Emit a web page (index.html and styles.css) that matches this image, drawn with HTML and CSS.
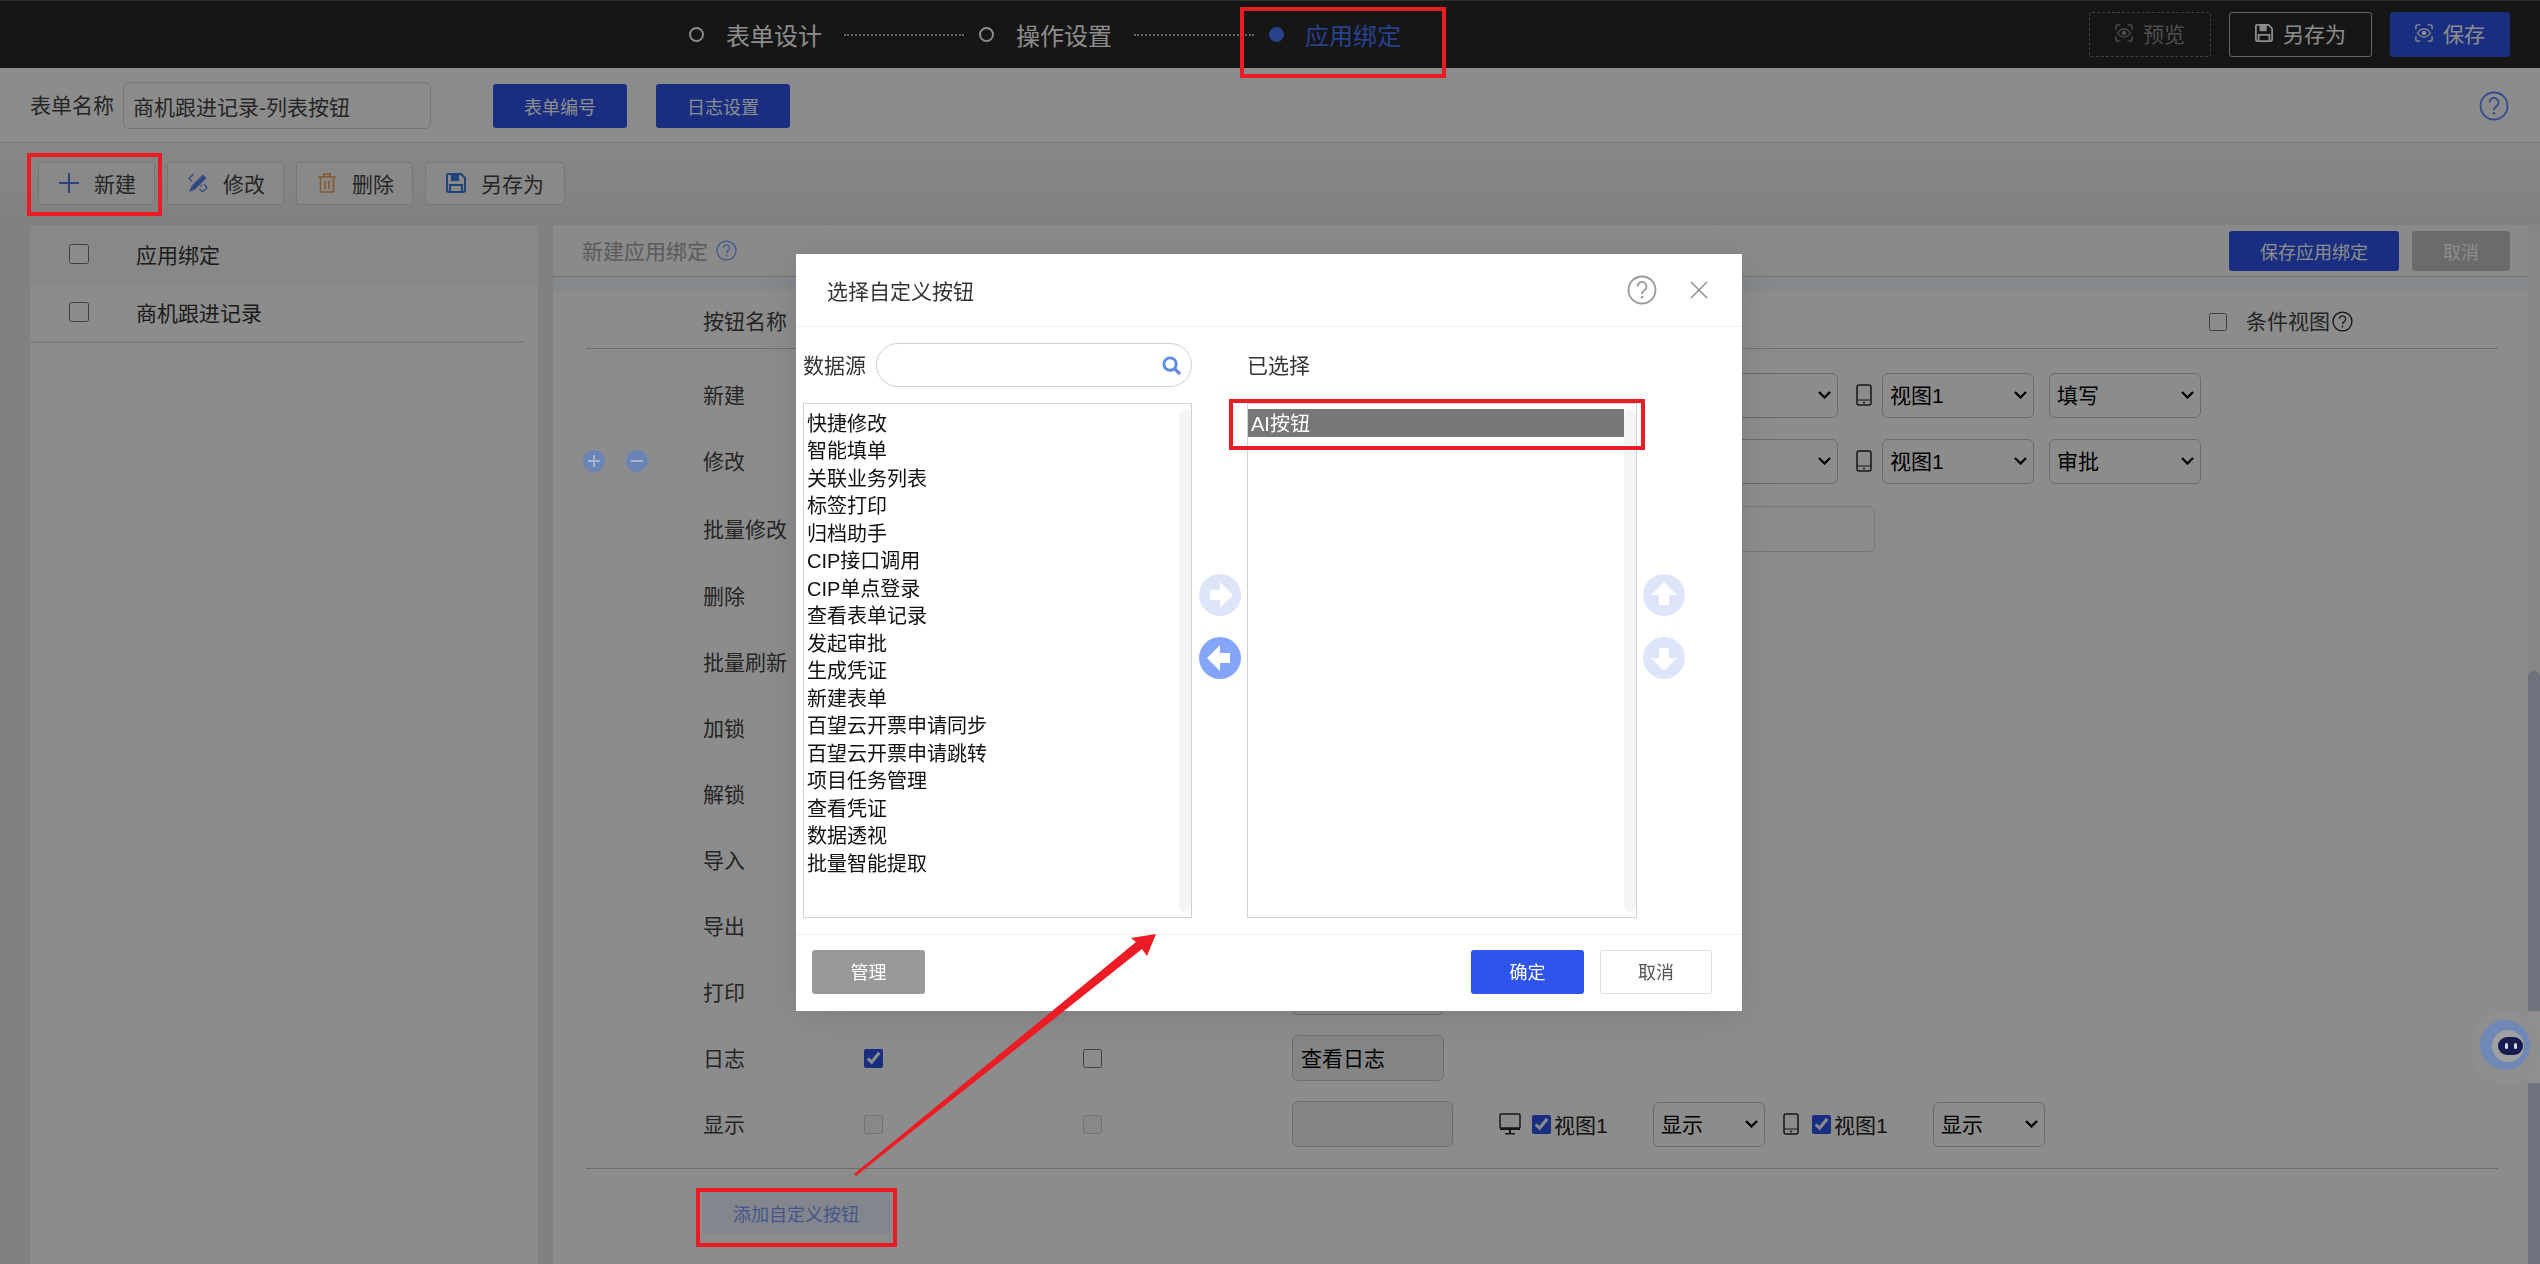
FILE: index.html
```html
<!DOCTYPE html>
<html lang="zh-CN">
<head>
  <meta charset="UTF-8">
  <meta name="viewport" content="width=device-width, initial-scale=1.0">
  <title>应用绑定</title>
  <link rel="stylesheet" href="styles.css">
</head>
<body>

  <svg class="icon-defs" aria-hidden="true">
    <symbol id="i-help" viewBox="0 0 30 30">
      <circle cx="15" cy="15" r="13.5" fill="none" stroke="currentColor" stroke-width="1.8"/>
      <path d="M10.5 11.5a4.5 4.5 0 1 1 7 3.7c-1.6 1.1-2.5 2-2.5 3.8" fill="none" stroke="currentColor" stroke-width="1.8"/>
      <circle cx="15" cy="22.3" r="1.3" fill="currentColor"/>
    </symbol>
    <symbol id="i-scan" viewBox="0 0 20 20">
      <path d="M1 6V3a2 2 0 0 1 2-2h3M14 1h3a2 2 0 0 1 2 2v3M19 14v3a2 2 0 0 1-2 2h-3M6 19H3a2 2 0 0 1-2-2v-3" fill="none" stroke="currentColor" stroke-width="1.6"/>
      <path d="M3 10c2-3.500 4.300-4.500 7-4.500s5 1 7 4.500c-2 3.500-4.300 4.500-7 4.500S5 13.500 3 10z" fill="none" stroke="currentColor" stroke-width="1.4"/>
      <circle cx="10" cy="10" r="2.500" fill="currentColor"/>
    </symbol>
    <symbol id="i-save" viewBox="0 0 20 20">
      <path d="M2 1h13l4 4v12a2 2 0 0 1-2 2H3a2 2 0 0 1-2-2V2a1 1 0 0 1 1-1z" fill="none" stroke="currentColor" stroke-width="2"/>
      <path d="M5 1h8v7H5z" fill="currentColor"/>
      <path d="M4 19v-7h12v7" fill="none" stroke="currentColor" stroke-width="2"/>
    </symbol>
    <symbol id="i-monitor" viewBox="0 0 22 22">
      <rect x="1" y="1" width="20" height="14" rx="1" fill="none" stroke="currentColor" stroke-width="1.500"/>
      <path d="M1 15h20v2H1zM10 17h2v3h-2zM6 20h10v1.500H6z" fill="currentColor"/>
    </symbol>
    <symbol id="i-phone" viewBox="0 0 16 22">
      <rect x="1" y="1" width="14" height="20" rx="2" fill="none" stroke="currentColor" stroke-width="1.500"/>
      <path d="M1 16h14" stroke="currentColor" stroke-width="1"/>
      <circle cx="8" cy="18.500" r="1" fill="currentColor"/>
    </symbol>
    <symbol id="i-arrow" viewBox="0 0 42 42">
      <path d="M11 16h10V8l13 13-13 13v-8H11z" fill="#fff"/>
    </symbol>
  </svg>

  <header class="topbar">
    <div class="steps">
      <span class="step-dot"></span><span class="step-name">表单设计</span>
      <span class="step-line"></span>
      <span class="step-dot"></span><span class="step-name">操作设置</span>
      <span class="step-line"></span>
      <span class="step-dot step-dot-on"></span><span class="step-name step-name-on">应用绑定</span>
    </div>
    <div class="top-actions">
      <button class="top-btn top-btn-off"><svg class="top-icon"><use href="#i-scan"/></svg>预览</button>
      <button class="top-btn top-btn-line"><svg class="top-icon"><use href="#i-save"/></svg>另存为</button>
      <button class="top-btn top-btn-main"><svg class="top-icon"><use href="#i-scan"/></svg>保存</button>
    </div>
  </header>

  <section class="form-head">
    <span class="form-label">表单名称</span>
    <input class="form-name" type="text" value="商机跟进记录-列表按钮">
    <button class="blue-btn form-btn-first">表单编号</button>
    <button class="blue-btn form-btn-second">日志设置</button>
    <svg class="form-help"><use href="#i-help"/></svg>
  </section>

  <section class="toolbar">
    <button class="tool-btn">
      <svg class="tool-icon tool-plus" viewBox="0 0 20 20"><path d="M10 0v20M0 10h20" stroke="currentColor" stroke-width="2"/></svg>新建
    </button>
    <button class="tool-btn">
      <svg class="tool-icon tool-edit" viewBox="0 0 20 20">
        <path d="M15 1.500l3.500 3.500L7 16.500 1 19l2.500-6z" fill="currentColor"/>
        <path d="M5.500 1L1 5.500l3 3M14 12l-1.500 1.500M16 11l3 3.500-4.500 4.500-3-3" fill="none" stroke="currentColor" stroke-width="1.200"/>
      </svg>修改
    </button>
    <button class="tool-btn">
      <svg class="tool-icon tool-trash" viewBox="0 0 20 20">
        <path d="M1 4h18M7 4V1h6v3M3.500 4v15h13V4M8 8v8M12 8v8" fill="none" stroke="currentColor" stroke-width="1.600"/>
      </svg>删除
    </button>
    <button class="tool-btn">
      <svg class="tool-icon tool-save"><use href="#i-save"/></svg>另存为
    </button>
  </section>

  <main class="main">
    <aside class="side">
      <div class="side-row side-row-head"><input type="checkbox"><span>应用绑定</span></div>
      <div class="side-row"><input type="checkbox"><span>商机跟进记录</span></div>
    </aside>

    <section class="panel">
      <div class="panel-head">
        <span class="panel-title">新建应用绑定</span>
        <svg class="panel-help"><use href="#i-help"/></svg>
        <button class="blue-btn panel-save">保存应用绑定</button>
        <button class="gray-btn panel-cancel">取消</button>
      </div>
      <div class="panel-band"></div>

      <div class="cfg-head">
        <span>按钮名称</span>
        <label class="cfg-cond"><input type="checkbox"><span>条件视图</span><svg class="cond-help"><use href="#i-help"/></svg></label>
      </div>

      <div class="cfg-rows">
        <div class="cfg-row">
          <span></span><span class="cfg-name">新建</span><input type="checkbox" checked><input type="checkbox">
          <div class="cfg-last">
            <input class="cfg-input" type="text" value="新建">
            <svg class="dev-monitor"><use href="#i-monitor"/></svg>
            <select class="cfg-sel-pc"><option>视图1</option></select>
            <select class="cfg-sel-mode"><option>填写</option></select>
            <svg class="dev-phone"><use href="#i-phone"/></svg>
            <select class="cfg-sel cfg-sel-m"><option>视图1</option></select>
            <select class="cfg-sel cfg-sel-t"><option>填写</option></select>
          </div>
        </div>
        <div class="cfg-row">
          <div class="row-ops">
            <svg class="op-icon" viewBox="0 0 22 22"><circle cx="11" cy="11" r="11" fill="currentColor"/><path d="M5 11h12M11 5v12" stroke="#a4b4d2" stroke-width="2"/></svg>
            <svg class="op-icon" viewBox="0 0 22 22"><circle cx="11" cy="11" r="11" fill="currentColor"/><path d="M5 11h12" stroke="#a4b4d2" stroke-width="2"/></svg>
          </div>
          <span class="cfg-name">修改</span><input type="checkbox" checked><input type="checkbox">
          <div class="cfg-last">
            <input class="cfg-input" type="text" value="修改">
            <svg class="dev-monitor"><use href="#i-monitor"/></svg>
            <select class="cfg-sel-pc"><option>视图1</option></select>
            <select class="cfg-sel-mode"><option>审批</option></select>
            <svg class="dev-phone"><use href="#i-phone"/></svg>
            <select class="cfg-sel cfg-sel-m"><option>视图1</option></select>
            <select class="cfg-sel cfg-sel-t"><option>审批</option></select>
          </div>
        </div>
        <div class="cfg-row cfg-row-tall">
          <span></span><span class="cfg-name">批量修改</span><input type="checkbox"><input type="checkbox">
          <div class="cfg-last">
            <input class="cfg-input" type="text" value="批量修改">
            <input class="cfg-extra" type="text">
          </div>
        </div>
        <div class="cfg-row">
          <span></span><span class="cfg-name">删除</span><input type="checkbox"><input type="checkbox">
          <div class="cfg-last"><input class="cfg-input" type="text" value="删除"></div>
        </div>
        <div class="cfg-row">
          <span></span><span class="cfg-name">批量刷新</span><input type="checkbox"><input type="checkbox">
          <div class="cfg-last"><input class="cfg-input" type="text" value="批量刷新"></div>
        </div>
        <div class="cfg-row">
          <span></span><span class="cfg-name">加锁</span><input type="checkbox"><input type="checkbox">
          <div class="cfg-last"><input class="cfg-input" type="text" value="加锁"></div>
        </div>
        <div class="cfg-row">
          <span></span><span class="cfg-name">解锁</span><input type="checkbox"><input type="checkbox">
          <div class="cfg-last"><input class="cfg-input" type="text" value="解锁"></div>
        </div>
        <div class="cfg-row">
          <span></span><span class="cfg-name">导入</span><input type="checkbox"><input type="checkbox">
          <div class="cfg-last"><input class="cfg-input" type="text" value="导入"></div>
        </div>
        <div class="cfg-row">
          <span></span><span class="cfg-name">导出</span><input type="checkbox"><input type="checkbox">
          <div class="cfg-last"><input class="cfg-input" type="text" value="导出"></div>
        </div>
        <div class="cfg-row">
          <span></span><span class="cfg-name">打印</span><input type="checkbox"><input type="checkbox">
          <div class="cfg-last"><input class="cfg-input" type="text" value="打印"></div>
        </div>
        <div class="cfg-row">
          <span></span><span class="cfg-name">日志</span><input type="checkbox" checked><input type="checkbox">
          <div class="cfg-last"><input class="cfg-input" type="text" value="查看日志"></div>
        </div>
        <div class="cfg-row">
          <span></span><span class="cfg-name">显示</span><input type="checkbox" disabled><input type="checkbox" disabled>
          <div class="cfg-last">
            <input class="cfg-input cfg-input-wide" type="text" disabled>
            <svg class="dev-monitor dev-monitor-show"><use href="#i-monitor"/></svg>
            <label class="view-check"><input type="checkbox" checked>视图1</label>
            <select class="show-sel"><option>显示</option></select>
            <svg class="dev-phone dev-phone-show"><use href="#i-phone"/></svg>
            <label class="view-check"><input type="checkbox" checked>视图1</label>
            <select class="show-sel"><option>显示</option></select>
          </div>
        </div>
      </div>

      <div class="cfg-foot"><button class="add-btn">添加自定义按钮</button></div>
    </section>

    <div class="scrollbar"><span class="scroll-thumb"></span></div>
  </main>

  <!-- 悬浮机器人 -->
  <div class="bot">
    <svg viewBox="0 0 69 72" width="69" height="72">
      <rect x="57" y="0" width="12" height="72" fill="#8f8f8f"/>
      <circle cx="36" cy="36" r="35" fill="#8e8e8e" stroke="#939393" stroke-width="1"/>
      <circle cx="34" cy="34" r="25" fill="#6f88b6"/>
      <circle cx="37" cy="35" r="16" fill="#a0a0a0"/>
      <rect x="27" y="26" width="25" height="18" rx="9" fill="#171c50"/>
      <rect x="34" y="32" width="3" height="6" rx="1.500" fill="#d8d8e0"/>
      <rect x="43" y="32" width="3" height="6" rx="1.500" fill="#d8d8e0"/>
    </svg>
  </div>

  <div class="mask"></div>

  <div class="dialog">
    <div class="dialog-head">
      <span class="dialog-title">选择自定义按钮</span>
      <svg class="dialog-help"><use href="#i-help"/></svg>
      <svg class="dialog-close" viewBox="0 0 18 18"><path d="M1 1l16 16M17 1L1 17" stroke="currentColor" stroke-width="1.400"/></svg>
    </div>

    <div class="dialog-body">
      <div class="pick-col">
        <div class="pick-head">
          <span class="pick-label">数据源</span>
          <div class="search-box">
            <svg class="search-icon" viewBox="0 0 20 20"><circle cx="8.500" cy="8.500" r="6.500" fill="none" stroke="currentColor" stroke-width="3"/><path d="M13 13l6 6" stroke="currentColor" stroke-width="3.500"/></svg>
          </div>
        </div>
        <div class="pick-list">
          <ul class="pick-items">
            <li>快捷修改</li>
            <li>智能填单</li>
            <li>关联业务列表</li>
            <li>标签打印</li>
            <li>归档助手</li>
            <li>CIP接口调用</li>
            <li>CIP单点登录</li>
            <li>查看表单记录</li>
            <li>发起审批</li>
            <li>生成凭证</li>
            <li>新建表单</li>
            <li>百望云开票申请同步</li>
            <li>百望云开票申请跳转</li>
            <li>项目任务管理</li>
            <li>查看凭证</li>
            <li>数据透视</li>
            <li>批量智能提取</li>
          </ul>
          <span class="pick-track"></span>
        </div>
      </div>

      <div class="move-col">
        <span class="round-btn round-off"><svg viewBox="0 0 42 42"><use href="#i-arrow"/></svg></span>
        <span class="round-btn round-on"><svg class="flip-left" viewBox="0 0 42 42"><use href="#i-arrow"/></svg></span>
      </div>

      <div class="pick-col pick-col-right">
        <div class="pick-head"><span class="pick-label">已选择</span></div>
        <div class="pick-list">
          <ul class="pick-items pick-items-on">
            <li class="pick-selected">AI按钮</li>
          </ul>
          <span class="pick-track"></span>
        </div>
      </div>

      <div class="move-col move-col-right">
        <span class="round-btn round-off"><svg class="turn-up" viewBox="0 0 42 42"><use href="#i-arrow"/></svg></span>
        <span class="round-btn round-off"><svg class="turn-down" viewBox="0 0 42 42"><use href="#i-arrow"/></svg></span>
      </div>
    </div>

    <div class="dialog-foot">
      <button class="dlg-btn dlg-manage">管理</button>
      <button class="dlg-btn dlg-ok">确定</button>
      <button class="dlg-btn dlg-cancel">取消</button>
    </div>
  </div>

  <!-- 截图上的红色标注 -->
  <div class="mark mark-step"></div>
  <div class="mark mark-new"></div>
  <div class="mark mark-picked"></div>
  <div class="mark mark-add"></div>
  <svg class="mark-arrow" viewBox="0 0 2540 1264">
    <path d="M854 1174L1136 942L1131 938L1156 934L1147 956L1142 949L856 1176Z" fill="#ed1c24"/>
  </svg>

</body>
</html>
```

FILE: styles.css
```css
* {
  box-sizing: border-box;
}

html, body {
  margin: 0;
  height: 1264px;
  overflow: hidden;
}

body {
  font-family: "Liberation Sans", "Noto Sans CJK SC", sans-serif;
  font-size: 21px;
  color: #454545;
  background-color: #ebebed;
}

button, input, select {
  font-family: inherit;
}

button {
  padding: 0;
  cursor: pointer;
}

.icon-defs {
  display: none;
}

/* top bar */
.topbar {
  height: 68px;
  display: flex;
  align-items: center;
  padding: 0 30px 0 689px;
  background-color: #282828;
  border-top: 1px solid #555;
}

.steps {
  display: flex;
  align-items: center;
}

.step-dot {
  width: 15px;
  height: 15px;
  margin-right: 22px;
  border: 2px solid #fff;
  border-radius: 50%;
}

.step-dot-on {
  margin-right: 21px;
  background-color: #4a78ff;
  border-color: #4a78ff;
}

.step-name {
  font-size: 24px;
  color: #fff;
}

.step-name-on {
  color: #4a78ff;
}

.step-line {
  width: 120px;
  margin: 0 15px 0 22px;
  border-top: 2px dotted #bbb;
}

.top-actions {
  display: flex;
  gap: 18px;
  margin-left: auto;
}

.top-btn {
  height: 45px;
  display: flex;
  align-items: center;
  gap: 10px;
  padding: 0 25px 3px;
  font-size: 21px;
  color: #fff;
  background: none;
  border: 1px solid #bbb;
  border-radius: 3px;
}

.top-btn-off {
  color: #8f8f8f;
  border: 1px dashed #777;
}

.top-btn-main {
  padding: 0 24px 3px;
  background-color: #2f54eb;
  border-color: #2f54eb;
}

.top-icon {
  width: 18px;
  height: 18px;
}

/* form name row */
.form-head {
  height: 75px;
  display: flex;
  align-items: center;
  padding: 1px 31px 0 30px;
  background-color: #fff;
  border-bottom: 1px solid #d6d6d6;
}

.form-label {
  width: 93px;
  padding-bottom: 3px;
}

.form-name {
  width: 308px;
  height: 47px;
  padding: 0 9px;
  font-size: 21px;
  color: #454545;
  border: 1px solid #d9d9d9;
  border-radius: 6px;
}

.blue-btn {
  font-size: 18px;
  color: #fff;
  background-color: #2f54eb;
  border: none;
  border-radius: 3px;
}

.form-head .blue-btn {
  width: 134px;
  height: 44px;
}

.form-btn-first {
  margin-left: 62px;
}

.form-btn-second {
  margin-left: 29px;
}

.form-help {
  width: 30px;
  height: 30px;
  margin-left: auto;
  color: #5a8cff;
}

/* toolbar */
.toolbar {
  height: 82px;
  display: flex;
  gap: 12px;
  padding: 19px 0 0 38px;
  background: linear-gradient(#f6f6f6, #ebebed);
}

.tool-btn {
  height: 43px;
  display: flex;
  align-items: center;
  gap: 15px;
  padding: 0 18px 2px 20px;
  font-size: 21px;
  color: #454545;
  background-color: #fafafa;
  border: 1px solid #d9d9d9;
  border-radius: 3px;
}

.tool-btn:last-child {
  padding-right: 20px;
}

.tool-icon {
  width: 20px;
  height: 20px;
}

.tool-plus {
  color: #5578e0;
}

.tool-edit {
  color: #5b82ef;
}

.tool-trash {
  color: #f2a25a;
}

.tool-save {
  color: #3c7ae0;
}

/* main area */
.main {
  height: 1039px;
  display: flex;
  padding-left: 30px;
}

.side {
  width: 508px;
  flex-shrink: 0;
  background-color: #fff;
}

.side-row {
  width: 494px;
  height: 58px;
  display: flex;
  align-items: center;
  gap: 47px;
  padding: 0 0 2px 39px;
  color: #333;
  border-bottom: 2px solid #e6e6e6;
}

.side-row-head {
  width: 508px;
  height: 60px;
  background-color: #f7f7f7;
  border-bottom: none;
}

.side input[type="checkbox"] {
  width: 20px;
  height: 20px;
  margin: 0;
}

.panel {
  flex: 1;
  margin-left: 15px;
  background-color: #fff;
}

.panel-head {
  height: 52px;
  display: flex;
  align-items: center;
  padding: 0 18px 0 29px;
  background-color: #fbfbfb;
  border-bottom: 1px solid #d0d0d0;
}

.panel-title {
  color: #a6a6a6;
  padding-bottom: 2px;
}

.panel-help {
  width: 21px;
  height: 21px;
  margin-left: 8px;
  color: #7aa0ff;
}

.panel-head .blue-btn {
  height: 40px;
}

.panel-save {
  width: 170px;
  margin-left: auto;
}

.gray-btn {
  height: 40px;
  font-size: 18px;
  color: #fff;
  background-color: #c4c4c4;
  border: none;
  border-radius: 3px;
}

.panel-cancel {
  width: 98px;
  margin-left: 13px;
}

.panel-band {
  height: 13px;
  background-color: #f2f8ff;
}

.cfg-head {
  height: 59px;
  display: flex;
  align-items: center;
  justify-content: space-between;
  margin: 0 30px 0 33px;
  padding: 2px 145px 0 117px;
  border-bottom: 1px solid #c9c9c9;
}

.cfg-cond {
  display: flex;
  align-items: center;
}

.cfg-cond input {
  width: 18px;
  height: 18px;
  margin: 4px 19px 0 0;
}

.cond-help {
  width: 21px;
  height: 21px;
  margin: 3px 0 0 2px;
  color: #222;
}

.cfg-rows {
  padding: 13px 0 0 30px;
}

.cfg-row {
  height: 66px;
  display: grid;
  grid-template-columns: 120px 161px 219px 209px auto;
  align-items: center;
  justify-items: start;
}

.cfg-row-tall {
  height: 69px;
}

.cfg-name {
  padding-bottom: 2px;
}

.cfg-row input[type="checkbox"] {
  width: 19px;
  height: 19px;
  margin: 0;
  accent-color: #2f54eb;
}

.row-ops {
  display: flex;
  gap: 21px;
  position: relative;
  z-index: 101;
}

.op-icon {
  width: 22px;
  height: 22px;
  color: #6a85b5;
}

.cfg-last {
  display: flex;
  align-items: center;
}

.cfg-input {
  width: 152px;
  height: 46px;
  padding: 0 8px 2px;
  font-size: 21px;
  color: #000;
  background-color: #f3f3f3;
  border: 1px solid #c8c8c8;
  border-radius: 6px;
}

.cfg-input-wide {
  width: 161px;
}

.cfg-extra {
  width: 175px;
  height: 46px;
  margin-left: 256px;
  background-color: #fff;
  border: 1px solid #d9d9d9;
  border-radius: 6px;
}

.cfg-last select {
  height: 45px;
  padding: 0 24px 0 7px;
  font-size: 21px;
  color: #000;
  appearance: none;
  background: #fff url("data:image/svg+xml,%3Csvg xmlns='http://www.w3.org/2000/svg' width='13' height='8'%3E%3Cpath d='M1 1l5.500 5.500L12 1' fill='none' stroke='%23000' stroke-width='2.300'/%3E%3C/svg%3E") no-repeat right 6px center;
  border: 1px solid #c4c4c4;
  border-radius: 6px;
}

.dev-monitor {
  width: 22px;
  height: 22px;
  margin: 0 9px 0 55px;
  color: #2a2a2a;
  flex-shrink: 0;
}

.dev-monitor-show {
  margin: 0 11px 0 46px;
}

.dev-phone {
  width: 16px;
  height: 22px;
  margin: 0 10px 0 18px;
  color: #2a2a2a;
  flex-shrink: 0;
}

.dev-phone-show {
  margin: 0 13px 0 18px;
}

.cfg-sel {
  width: 152px;
}

.cfg-sel-pc {
  width: 110px;
}

.cfg-sel-mode {
  width: 184px;
  margin-left: 14px;
}

.cfg-sel-t {
  margin-left: 15px;
}

.view-check {
  width: 121px;
  display: flex;
  align-items: center;
  gap: 3px;
  color: #222;
}

.show-sel {
  width: 112px;
}

.cfg-foot {
  margin: 11px 30px 0 33px;
  padding: 23px 0 0 116px;
  border-top: 1px solid #c9c9c9;
}

.add-btn {
  width: 188px;
  height: 42px;
  font-size: 18px;
  color: #7f9dff;
  background-color: #eef4ff;
  border: none;
  border-radius: 3px;
}

.scrollbar {
  width: 12px;
  flex-shrink: 0;
  padding-top: 446px;
  background-color: #f4f4f4;
}

.scroll-thumb {
  display: block;
  height: 100%;
  background-color: #c8d0e4;
  border-radius: 6px 6px 0 0;
}

/* robot sits at the window edge */
.bot {
  position: fixed;
  left: 2471px;
  top: 1011px;
  z-index: 101;
  width: 69px;
  height: 72px;
  overflow: hidden;
}

.mask {
  position: fixed;
  inset: 0;
  z-index: 100;
  background-color: rgba(0, 0, 0, 0.45);
}

/* dialog */
.dialog {
  position: fixed;
  left: 796px;
  top: 254px;
  z-index: 110;
  width: 946px;
  height: 757px;
  display: flex;
  flex-direction: column;
  background-color: #fff;
  box-shadow: 0 4px 40px rgba(0, 0, 0, 0.12);
}

.dialog-head {
  height: 73px;
  flex-shrink: 0;
  display: flex;
  align-items: center;
  padding: 0 34px 0 31px;
  border-bottom: 1px solid #f0f0f0;
}

.dialog-title {
  font-size: 21px;
  color: #333;
}

.dialog-help {
  width: 30px;
  height: 30px;
  margin-left: auto;
  color: #999;
}

.dialog-close {
  width: 18px;
  height: 18px;
  margin-left: 33px;
  color: #888;
}

.dialog-body {
  height: 607px;
  flex-shrink: 0;
  display: flex;
  padding: 16px 0 0 7px;
}

.pick-col {
  width: 389px;
}

.pick-col-right {
  width: 390px;
}

.pick-head {
  height: 44px;
  display: flex;
  align-items: center;
  margin-bottom: 16px;
}

.pick-label {
  width: 73px;
  padding-bottom: 3px;
  color: #333;
}

.search-box {
  width: 316px;
  height: 44px;
  display: flex;
  align-items: center;
  justify-content: flex-end;
  padding-right: 10px;
  border: 1px solid #d0d0d0;
  border-radius: 22px;
}

.search-icon {
  width: 19px;
  height: 19px;
  color: #5f88e8;
}

.pick-list {
  height: 515px;
  display: flex;
  justify-content: space-between;
  padding: 5px 0 5px 3px;
  border: 1px solid #d0d0d0;
  border-top-color: #d8d8d8;
}

.pick-items {
  flex: 1;
  margin: 0;
  padding: 0;
  list-style: none;
  font-size: 20px;
  line-height: 27.5px;
  color: #111;
}

.pick-items li {
  height: 27.5px;
  padding-top: 1.5px;
}

.pick-items-on {
  margin-left: -3px;
}

.pick-items .pick-selected {
  padding-left: 3px;
  color: #fff;
  background-color: #777;
  line-height: 26px;
}

.pick-track {
  width: 12px;
  flex-shrink: 0;
  background-color: #f5f5f5;
  border-radius: 6px;
}

.move-col {
  width: 55px;
  display: flex;
  flex-direction: column;
  gap: 21px;
  padding: 231px 0 0 7px;
}

.move-col-right {
  padding-left: 6px;
}

.round-btn {
  width: 42px;
  height: 42px;
  display: block;
  border-radius: 50%;
}

.round-btn svg {
  display: block;
  width: 42px;
  height: 42px;
}

.round-off {
  background-color: #dfe5f8;
}

.round-on {
  background-color: #85a5fa;
}

.flip-left {
  transform: rotate(180deg);
}

.turn-up {
  transform: rotate(-90deg);
}

.turn-down {
  transform: rotate(90deg);
}

.dialog-foot {
  flex: 1;
  display: flex;
  align-items: flex-start;
  padding: 15px 30px 0 16px;
  border-top: 1px solid #f0f0f0;
}

.dlg-btn {
  width: 113px;
  height: 44px;
  padding-bottom: 2px;
  font-size: 18px;
  border-radius: 3px;
}

.dlg-manage {
  color: #fff;
  background-color: #999;
  border: none;
}

.dlg-ok {
  margin-left: auto;
  color: #fff;
  background-color: #2f54eb;
  border: none;
}

.dlg-cancel {
  width: 112px;
  margin-left: 16px;
  color: #555;
  background-color: #fff;
  border: 1px solid #ddd;
}

/* red annotations drawn on the screenshot */
.mark {
  position: fixed;
  z-index: 120;
  border: 4px solid #ed1c24;
}

.mark-step {
  left: 1240px;
  top: 7px;
  width: 206px;
  height: 71px;
}

.mark-new {
  left: 27px;
  top: 153px;
  width: 135px;
  height: 63px;
}

.mark-picked {
  left: 1229px;
  top: 399px;
  width: 416px;
  height: 51px;
}

.mark-add {
  left: 696px;
  top: 1188px;
  width: 201px;
  height: 59px;
}

.mark-arrow {
  position: fixed;
  left: 0;
  top: 0;
  z-index: 120;
  width: 2540px;
  height: 1264px;
  pointer-events: none;
}
```
